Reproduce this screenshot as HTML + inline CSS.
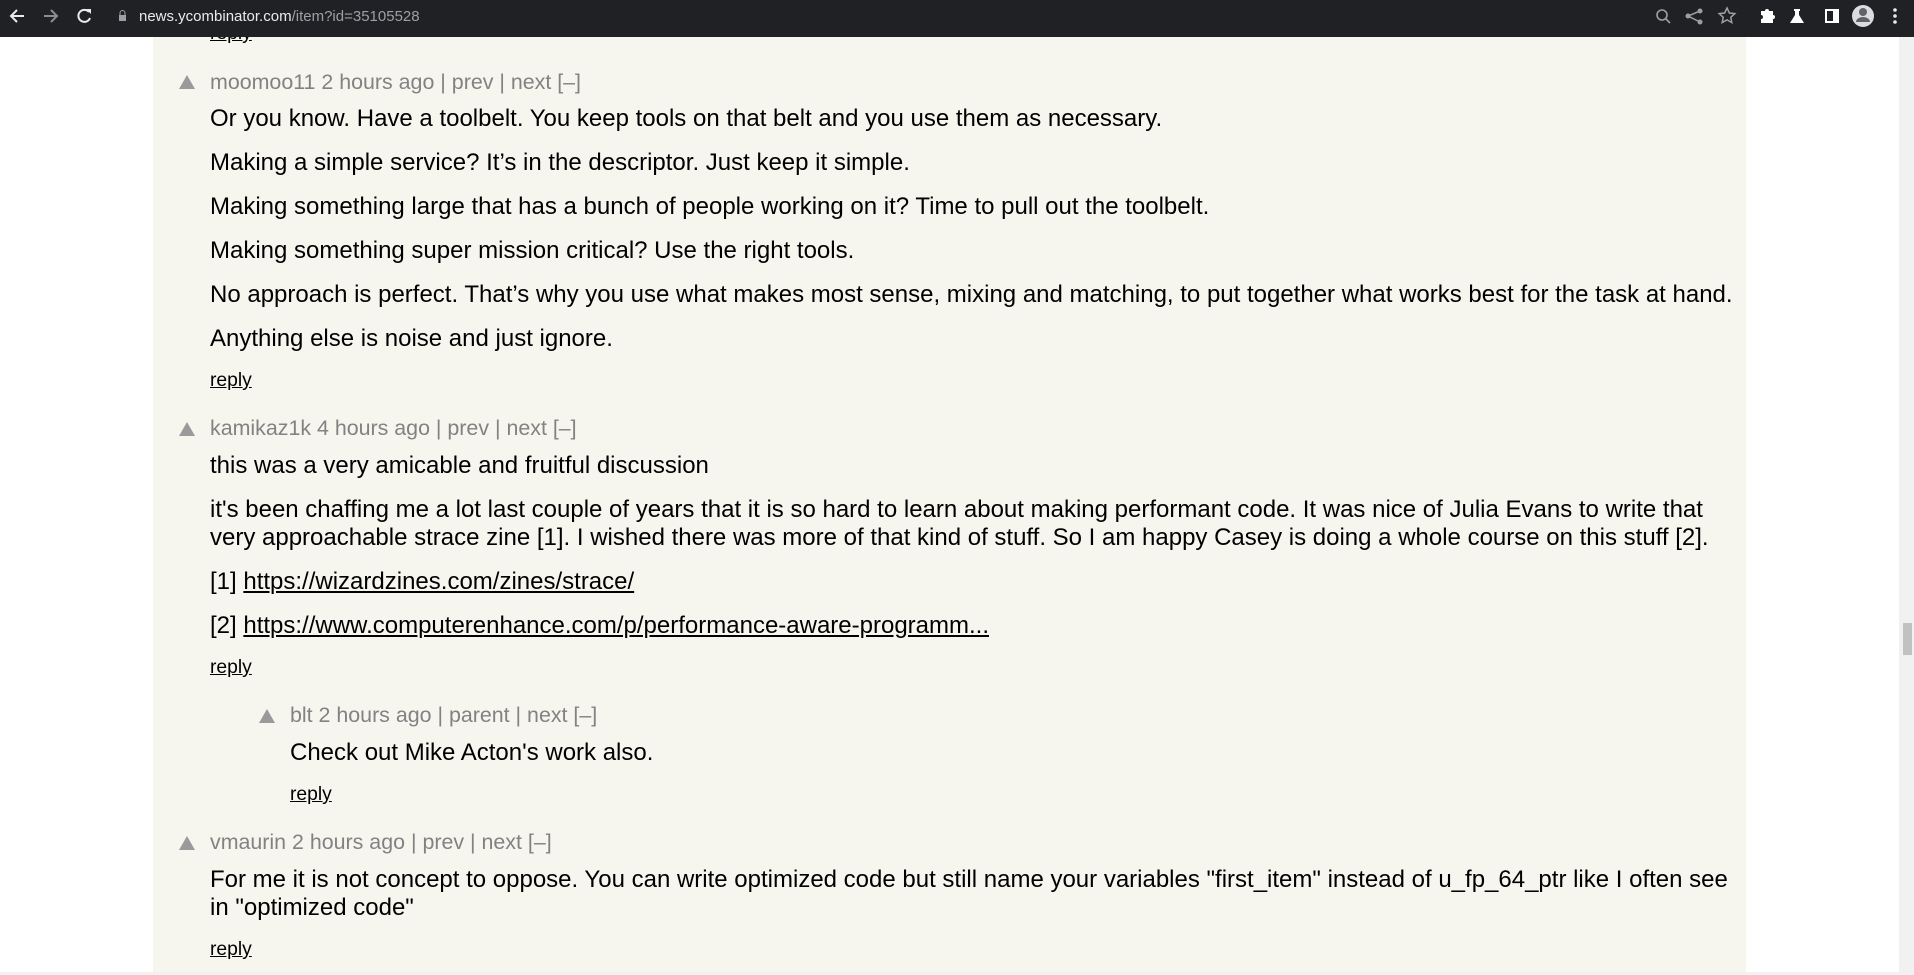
<!DOCTYPE html>
<html><head><meta charset="utf-8"><style>
*{margin:0;padding:0;box-sizing:border-box}
body{width:1914px;height:975px;overflow:hidden;background:#fff;font-family:"Liberation Sans",Arial,sans-serif;position:relative}
.bar{position:absolute;left:0;top:0;width:1914px;height:37px;background:#202124;z-index:5;color:#9aa0a6;font-size:15px}
.bg{position:absolute;left:153px;top:37px;width:1593px;height:938px;background:#f6f6ef}
.l{position:absolute;white-space:nowrap;font-size:24px;line-height:28px;color:#000}
.h{color:#828282;font-size:21.4px}
.r{font-size:19.3px;text-decoration:underline}
.tri{position:absolute;width:0;height:0;border-left:8px solid transparent;border-right:8px solid transparent;border-bottom:14px solid #9a9a9a}
.sb{position:absolute;right:0;top:37px;width:15px;height:938px;background:#f1f1f1}
</style></head><body>
<div class="bar">
<svg width="1914" height="37" style="position:absolute;left:0;top:0">
<g stroke="#e8eaed" stroke-width="2" fill="none"><path d="M24 16H12M17 10l-6 6 6 6"/></g>
<g stroke="#8a8d91" stroke-width="2" fill="none"><path d="M44 16h12M51 10l6 6-6 6"/></g>
<path d="M89 12a6 6 0 1 0 1 6" stroke="#e8eaed" stroke-width="2" fill="none"/><path d="M86 9h5v5z" fill="#e8eaed"/>
<rect x="119" y="15" width="7" height="6" fill="#9aa0a6"/><path d="M120 15v-2a2.5 2.5 0 0 1 5 0v2" stroke="#9aa0a6" fill="none"/>
<circle cx="1662" cy="15" r="5" stroke="#9aa0a6" stroke-width="1.6" fill="none"/><path d="M1666 19l4 4" stroke="#9aa0a6" stroke-width="1.6"/>
<g fill="#9aa0a6"><circle cx="1700" cy="11" r="2.5"/><circle cx="1688" cy="16" r="2.5"/><circle cx="1700" cy="22" r="2.5"/></g><path d="M1700 11l-12 5 12 6" stroke="#9aa0a6" stroke-width="1.5" fill="none"/>
<path d="M1727 8l2.4 5 5.4.6-4 3.7 1 5.3-4.8-2.7-4.8 2.7 1-5.3-4-3.7 5.4-.6z" stroke="#9aa0a6" stroke-width="1.5" fill="none"/>
<path d="M1761 11h4a2 2 0 0 1 4 0h4v4a2 2 0 0 1 0 4v4h-12v-4a2 2 0 0 0 0-4z" fill="#fff"/>
<path d="M1794 9h6v2h-1v4l5 8h-14l5-8v-4h-1z" fill="#fff"/>
<rect x="1825" y="9" width="14" height="14" fill="#fff"/><rect x="1827" y="11" width="6" height="10" fill="#202124"/>
<circle cx="1863" cy="16" r="11" fill="#dadce0"/><circle cx="1863" cy="12" r="4" fill="#5f6368"/><path d="M1856 22a7 5 0 0 1 14 0z" fill="#5f6368"/>
<g fill="#e8eaed"><circle cx="1895" cy="10" r="1.8"/><circle cx="1895" cy="16" r="1.8"/><circle cx="1895" cy="22" r="1.8"/></g>
</svg>
<div style="position:absolute;left:139px;top:8px;color:#e8eaed">news.ycombinator.com<span style="color:#9aa0a6">/item?id=35105528</span></div>
</div>
<div class="bg"></div>
<div class="sb"></div>
<div style="position:absolute;right:2px;top:623px;width:9px;height:32px;background:#c1c1c1"></div>

<div class="l r" style="left:210px;top:20px">reply</div>

<div class="tri" style="left:179px;top:75px"></div>
<div class="l h" style="left:210px;top:68px">moomoo11 2 hours ago | prev | next [–]</div>
<div class="l" style="left:210px;top:105px">Or you know. Have a toolbelt. You keep tools on that belt and you use them as necessary.</div>
<div class="l" style="left:210px;top:149px">Making a simple service? It’s in the descriptor. Just keep it simple.</div>
<div class="l" style="left:210px;top:193px">Making something large that has a bunch of people working on it? Time to pull out the toolbelt.</div>
<div class="l" style="left:210px;top:237px">Making something super mission critical? Use the right tools.</div>
<div class="l" style="left:210px;top:281px">No approach is perfect. That’s why you use what makes most sense, mixing and matching, to put together what works best for the task at hand.</div>
<div class="l" style="left:210px;top:325px">Anything else is noise and just ignore.</div>
<div class="l r" style="left:210px;top:367px">reply</div>

<div class="tri" style="left:179px;top:422px"></div>
<div class="l h" style="left:210px;top:414px">kamikaz1k 4 hours ago | prev | next [–]</div>
<div class="l" style="left:210px;top:452px">this was a very amicable and fruitful discussion</div>
<div class="l" style="left:210px;top:496px">it's been chaffing me a lot last couple of years that it is so hard to learn about making performant code. It was nice of Julia Evans to write that</div>
<div class="l" style="left:210px;top:524px">very approachable strace zine [1]. I wished there was more of that kind of stuff. So I am happy Casey is doing a whole course on this stuff [2].</div>
<div class="l" style="left:210px;top:568px">[1] <u>https://wizardzines.com/zines/strace/</u></div>
<div class="l" style="left:210px;top:612px">[2] <u>https://www.computerenhance.com/p/performance-aware-programm...</u></div>
<div class="l r" style="left:210px;top:654px">reply</div>

<div class="tri" style="left:259px;top:709px"></div>
<div class="l h" style="left:290px;top:701px">blt 2 hours ago | parent | next [–]</div>
<div class="l" style="left:290px;top:739px">Check out Mike Acton's work also.</div>
<div class="l r" style="left:290px;top:781px">reply</div>

<div class="tri" style="left:179px;top:836px"></div>
<div class="l h" style="left:210px;top:828px">vmaurin 2 hours ago | prev | next [–]</div>
<div class="l" style="left:210px;top:866px">For me it is not concept to oppose. You can write optimized code but still name your variables "first_item" instead of u_fp_64_ptr like I often see</div>
<div class="l" style="left:210px;top:894px">in "optimized code"</div>
<div class="l r" style="left:210px;top:936px">reply</div>
<div style="position:absolute;left:0;top:972px;width:1914px;height:3px;background:#f1f1f1"></div>
</body></html>
